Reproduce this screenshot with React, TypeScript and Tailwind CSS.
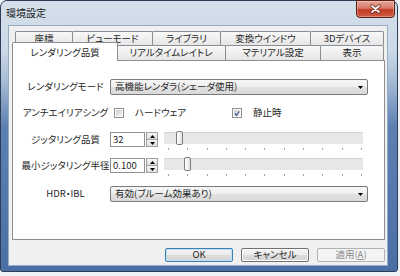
import React from "react";

const FONT = "[font-family:'Noto_Sans_CJK_JP','Noto_Sans',sans-serif] [font-feature-settings:'palt']";

function Tab({ w, children, ml = "-ml-px" }: { w: string; children: React.ReactNode; ml?: string }) {
  return (
    <div
      className={`${w} ${ml} h-full shrink-0 flex items-center justify-center border border-b-0 border-[#8b8e95] rounded-t-[2px] bg-[linear-gradient(180deg,#f8f8f8,#e6e6e6)]`}
    >
      {children}
    </div>
  );
}

function Arrow({ dir = "down" }: { dir?: "up" | "down" }) {
  return (
    <svg width="5" height="3" viewBox="0 0 5 3">
      {dir === "down" ? <polygon points="0,0 5,0 2.5,3" fill="#000" /> : <polygon points="0,3 5,3 2.5,0" fill="#000" />}
    </svg>
  );
}

function Dropdown({ text }: { text: string }) {
  return (
    <div className="w-[258px] h-[16px] flex items-center justify-between border border-[#7a7a7a] rounded-[2px] bg-[linear-gradient(180deg,#f7f7f7_0%,#eeeeee_50%,#e2e2e2_50%,#d9d9d9_100%)] pl-[4px] pr-[4px]">
      <span className="whitespace-nowrap">{text}</span>
      <Arrow />
    </div>
  );
}

function Checkbox({ checked }: { checked?: boolean }) {
  return (
    <div className="w-[10px] h-[10px] shrink-0 border border-[#8e8f8f] bg-white p-px">
      <div className="w-full h-full bg-[linear-gradient(135deg,#c9ccd2,#f4f4f4)] flex items-center justify-center">
        {checked && (
          <svg width="7" height="7" viewBox="0 0 7 7">
            <polyline points="1,3.5 3,5.8 6,1" fill="none" stroke="#3d5a8c" strokeWidth="1.4" />
          </svg>
        )}
      </div>
    </div>
  );
}

function Spin({ value }: { value: string }) {
  return (
    <div className="flex h-[15px]">
      <div className="w-[35px] h-full border border-[#8e8f8f] bg-white flex items-center pl-[2px]">{value}</div>
      <div className="w-[12px] h-full ml-px flex flex-col">
        <div className="h-[8px] border border-[#a0a0a0] bg-[linear-gradient(180deg,#f6f6f6,#dedede)] flex items-center justify-center">
          <Arrow dir="up" />
        </div>
        <div className="h-[7px] border border-t-0 border-[#a0a0a0] bg-[linear-gradient(180deg,#f6f6f6,#dedede)] flex items-center justify-center">
          <Arrow />
        </div>
      </div>
    </div>
  );
}

function Slider({ pos }: { pos: number }) {
  const ticks = Array.from({ length: 11 });
  return (
    <div className="ml-[6px] w-[199px] flex flex-col">
      <div className="relative h-[12px] bg-[#e6e7e8] border-t border-[#d4d6d8]">
        <div
          className="absolute top-[-2px] w-[7px] h-[14px] rounded-[2px] border border-[#7b7b7b] bg-[linear-gradient(90deg,#ffffff,#e2e2e2)]"
          style={{ left: pos }}
        />
      </div>
      <div className="mt-[4px] h-[2px] flex justify-between pl-[4px] pr-[1px]">
        {ticks.map((_, i) => (
          <div key={i} className="w-px h-[2px] bg-[#a5a5a5]" />
        ))}
      </div>
    </div>
  );
}

function Btn({ children, kind }: { children: React.ReactNode; kind: "default" | "normal" | "disabled" }) {
  const cls =
    kind === "default"
      ? "border-[#3c7fb1] shadow-[inset_0_0_0_1px_#bfe3f6] bg-[linear-gradient(180deg,#f3f3f3_0%,#ebebeb_50%,#dddddd_50%,#d3d3d3_100%)]"
      : kind === "normal"
      ? "border-[#707070] shadow-[inset_0_0_0_1px_#fbfbfb] bg-[linear-gradient(180deg,#f3f3f3_0%,#ebebeb_50%,#dddddd_50%,#d3d3d3_100%)]"
      : "border-[#adb2b5] bg-[#f4f4f4] text-[#8b8b8b]";
  return (
    <div className={`w-[68px] h-[14px] rounded-[2px] border flex items-center justify-center ${cls}`}>{children}</div>
  );
}

export default function App() {
  return (
    <div className={`w-[400px] h-[276px] bg-[#eef2f6] overflow-hidden text-[9.5px] leading-none text-[#262626] ${FONT}`}>
      <div className="w-[398px] h-[272px] rounded-t-[7px] rounded-b-[3px] border border-[#2b3d57] bg-[linear-gradient(180deg,#d4dfea_0px,#cbd8e6_50px,#a6bcd6_80px,#5d80b2_125px,#4a6fa4_272px)] flex flex-col">
        <div className="h-[24px] flex justify-between shrink-0">
          <div className="pl-[5px] pt-[7px] text-[10px] text-[#1a1a1a]">環境設定</div>
          <div className="w-[39px] h-[18px] -mt-px mr-[2px] rounded-b-[4px] border border-[#5a1d14] bg-[linear-gradient(180deg,#e7a597_0%,#d67967_45%,#c23c22_55%,#cf5d45_100%)] shadow-[inset_0_0_0_1px_rgba(255,255,255,0.3)] flex items-center justify-center">
            <svg width="11" height="10" viewBox="0 0 11 10">
              <path d="M2 2 L9 8 M9 2 L2 8" stroke="#5a1d14" strokeWidth="3.2" strokeLinecap="round" />
              <path d="M2 2 L9 8 M9 2 L2 8" stroke="#ffffff" strokeWidth="1.8" strokeLinecap="round" />
            </svg>
          </div>
        </div>
        <div className="flex-1 ml-[7px] mr-[9px] mb-[5px] border border-[#97abc4] bg-[#f0f0f0] flex flex-col">
          <div className="pt-[5px] flex flex-col">
            <div className="h-[14px] flex pl-[6px]">
              <Tab w="w-[58px]" ml="">座標</Tab>
              <Tab w="w-[81px]">ビューモード</Tab>
              <Tab w="w-[69px]">ライブラリ</Tab>
              <Tab w="w-[91px]">変換ウインドウ</Tab>
              <Tab w="w-[74px]">3Dデバイス</Tab>
            </div>
            <div className="h-[15px] flex items-end pl-[3px]">
              <div className="relative z-10 w-[106px] h-[19px] -mb-px shrink-0 flex items-center justify-center border border-b-0 border-[#8b8e95] rounded-t-[2px] bg-white pt-[1px]">
                レンダリング品質
              </div>
              <div className="h-[15px] flex -ml-[2px]">
                <Tab w="w-[110px]" ml="">リアルタイムレイトレ</Tab>
                <Tab w="w-[96px]">マテリアル設定</Tab>
                <Tab w="w-[64px]">表示</Tab>
              </div>
            </div>
            <div className="ml-[3px] w-[373px] h-[180px] border border-[#8b8e95] bg-white flex flex-col pl-[8px]">
              <div className="mt-[18px] h-[16px] flex items-center">
                <div className="w-[89px] text-center whitespace-nowrap">レンダリングモード</div>
                <Dropdown text="高機能レンダラ(シェーダ使用)" />
              </div>
              <div className="mt-[11px] h-[14px] flex items-center">
                <div className="w-[89px] text-center whitespace-nowrap">アンチエイリアシング</div>
                <div className="w-[118px] ml-[4px] flex items-center">
                  <Checkbox />
                  <span className="ml-[11px]">ハードウェア</span>
                </div>
                <Checkbox checked />
                <span className="ml-[11px]">静止時</span>
              </div>
              <div className="mt-[12px] h-[15px] flex items-start">
                <div className="w-[89px] h-[15px] flex items-center justify-center whitespace-nowrap">ジッタリング品質</div>
                <Spin value="32" />
                <Slider pos={12} />
              </div>
              <div className="mt-[11px] h-[15px] flex items-start">
                <div className="w-[89px] h-[15px] flex items-center justify-center whitespace-nowrap">最小ジッタリング半径</div>
                <Spin value="0.100" />
                <Slider pos={20} />
              </div>
              <div className="mt-[13px] h-[16px] flex items-center">
                <div className="w-[89px] text-center whitespace-nowrap">HDR・IBL</div>
                <Dropdown text="有効(ブルーム効果あり)" />
              </div>
            </div>
            <div className="mt-[8px] flex justify-end gap-[8px] pr-[2px]">
              <Btn kind="default">OK</Btn>
              <Btn kind="normal">キャンセル</Btn>
              <Btn kind="disabled">
                <span>
                  適用(<span className="underline">A</span>)
                </span>
              </Btn>
            </div>
          </div>
        </div>
      </div>
    </div>
  );
}
